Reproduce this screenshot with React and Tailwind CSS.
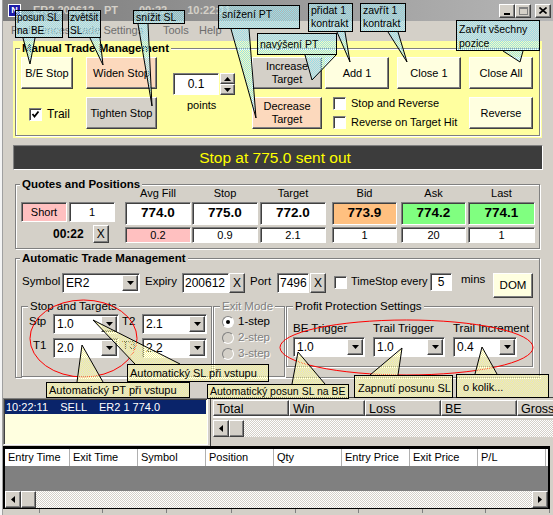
import React from "react";

const raised = "border border-t-white border-l-white border-r-[#404040] border-b-[#404040] shadow-[inset_-1px_-1px_0_#808080]";
const sunk = "border border-t-[#808080] border-l-[#808080] border-r-white border-b-white shadow-[inset_1px_1px_0_#404040]";
const etched = "border border-[#808080] shadow-[1px_1px_0_#fff,inset_1px_1px_0_#fff]";
const dither = "bg-[image:repeating-conic-gradient(#ffffff_0_25%,#d4d0c8_0_50%)] bg-[length:2px_2px]";
const cyan = "bg-white/25 bg-[image:repeating-conic-gradient(#96dfe9_0_25%,transparent_0_50%)] bg-[length:2px_2px] border border-black whitespace-nowrap";
const yel = "bg-white/30 bg-[image:repeating-conic-gradient(#f4f296_0_25%,transparent_0_50%)] bg-[length:2px_2px] border border-black whitespace-nowrap";

const DownTri = () => (
  <svg width="7" height="4" viewBox="0 0 7 4"><polygon points="0,0 7,0 3.5,4" fill="#000" /></svg>
);
const UpTri = () => (
  <svg width="7" height="4" viewBox="0 0 7 4"><polygon points="0,4 7,4 3.5,0" fill="#000" /></svg>
);
const LeftTri = () => (
  <svg width="4" height="7" viewBox="0 0 4 7"><polygon points="4,0 4,7 0,3.5" fill="#000" /></svg>
);
const RightTri = () => (
  <svg width="4" height="7" viewBox="0 0 4 7"><polygon points="0,0 0,7 4,3.5" fill="#000" /></svg>
);

const Btn = ({ w, h = "h-[32px]", bg = "bg-[#d4d0c8]", className = "", children }) => (
  <div className={`${w} ${h} ${bg} ${raised} shrink-0 flex items-center justify-center text-center leading-[13px] ${className}`}>
    {children}
  </div>
);

const Combo = ({ w, v }) => (
  <div className={`${w} h-[20px] shrink-0 flex bg-white ${sunk} p-[1px]`}>
    <span className="flex-1 pl-[2px] text-[12px] leading-[16px]">{v}</span>
    <div className={`w-[16px] h-full bg-[#d4d0c8] ${raised} flex items-center justify-center`}>
      <DownTri />
    </div>
  </div>
);

const Check = ({ on }) => (
  <div className={`w-[13px] h-[13px] shrink-0 bg-white ${sunk} flex items-center justify-center`}>
    {on && (
      <svg width="9" height="9" viewBox="0 0 9 9">
        <polyline points="1.5,4 3.5,6.5 7.5,1.5" fill="none" stroke="#000" strokeWidth="1.8" />
      </svg>
    )}
  </div>
);

const Radio = ({ on, off }) => (
  <div className={`w-[12px] h-[12px] rounded-full border border-[#808080] border-r-white border-b-white ${off ? "bg-[#d4d0c8]" : "bg-white"} flex items-center justify-center`}>
    {on && <div className="w-[4px] h-[4px] rounded-full bg-black" />}
  </div>
);

function TitleBar() {
  return (
    <div className="h-[21px] flex items-center pl-[5px] pr-[2px] bg-linear-to-r from-[#7c7c7c] to-[#b6b6b6]">
      <div className="w-[13px] h-[13px] bg-[#1c1ca8] border border-white text-white text-[9px] font-bold leading-[11px] text-center">N</div>
      <span className="ml-[12px] text-[#d4d0c8] font-bold text-[11px]">ER2 200612 - PT</span>
      <span className="ml-[21px] text-[#d4d0c8] font-bold text-[11px]">00:22</span>
      <span className="ml-[20px] text-[#d4d0c8] font-bold text-[11px]">10:22:11</span>
      <div className="flex-1" />
      <div className={`w-[16px] h-[14px] bg-[#d4d0c8] ${raised} flex items-end justify-center pb-[2px]`}>
        <div className="w-[6px] h-[2px] bg-black" />
      </div>
      <div className={`w-[16px] h-[14px] bg-[#d4d0c8] ${raised} flex items-center justify-center`}>
        <div className="w-[9px] h-[8px] border border-[#808080] border-t-2" />
      </div>
      <div className={`ml-[4px] w-[16px] h-[14px] bg-[#d4d0c8] ${raised} flex items-center justify-center`}>
        <svg width="8" height="7" viewBox="0 0 8 7">
          <path d="M0.5 0.5 L7.5 6.5 M7.5 0.5 L0.5 6.5" stroke="#000" strokeWidth="1.6" />
        </svg>
      </div>
    </div>
  );
}

function MenuBar() {
  return (
    <div className="h-[19px] flex items-center pl-[8px] text-[11px] text-[#6e6e6e] whitespace-nowrap">
      <span className="w-[61px]">Preferences</span>
      <span className="w-[91px]">Trade Settings</span>
      <span className="w-[36px]">Tools</span>
      <span>Help</span>
    </div>
  );
}

function ManualPanel() {
  return (
    <div className="h-[98px] pl-[10px] pt-[1px]">
      <div className="w-[529px] h-[97px] bg-[#ffff9f] px-[2px] pt-[1px]">
        <fieldset className={`w-[525px] h-[94px] ${etched}`}>
          <legend className="ml-[4px] px-[2px] bg-[#ffff9f] font-bold text-[11.5px] leading-[13px]">Manual Trade Management</legend>
          <div className="flex items-start pl-[5px] pt-[2px] text-[11px] whitespace-nowrap">
            <div className="w-[52px] flex flex-col">
              <Btn w="w-[52px]" bg="bg-[#ffffe0]">B/E Stop</Btn>
              <div className="mt-[16px] ml-[8px] flex items-center">
                <Check on />
                <span className="ml-[5px] text-[12px]">Trail</span>
              </div>
            </div>
            <div className="ml-[13px] w-[71px] flex flex-col">
              <Btn w="w-[71px]" bg="bg-[#fcd9bd]">Widen Stop</Btn>
              <Btn w="w-[71px]" className="mt-[8px]">Tighten Stop</Btn>
            </div>
            <div className="ml-[16px] mt-[16px] w-[62px] flex flex-col">
              <div className="flex">
                <div className={`w-[46px] h-[22px] bg-white ${sunk} flex items-center justify-center text-[12px]`}>0.1</div>
                <div className="ml-[1px] flex flex-col">
                  <div className={`w-[15px] h-[11px] bg-[#d4d0c8] ${raised} flex items-center justify-center`}><UpTri /></div>
                  <div className={`w-[15px] h-[11px] bg-[#d4d0c8] ${raised} flex items-center justify-center`}><DownTri /></div>
                </div>
              </div>
              <span className="ml-[14px] mt-[4px] leading-[13px]">points</span>
            </div>
            <div className="ml-[17px] w-[70px] flex flex-col">
              <Btn w="w-[70px]">Increase<br />Target</Btn>
              <Btn w="w-[70px]" bg="bg-[#fcd9bd]" className="mt-[8px]">Decrease<br />Target</Btn>
            </div>
            <div className="ml-[3px] flex flex-col">
              <div className="flex">
                <Btn w="w-[64px]" bg="bg-[#ffffe0]">Add 1</Btn>
                <Btn w="w-[64px]" bg="bg-[#ffffe0]" className="ml-[8px]">Close 1</Btn>
              </div>
              <div className="mt-[8px] ml-[8px] flex items-center h-[13px]">
                <Check />
                <span className="ml-[5px]">Stop and Reverse</span>
              </div>
              <div className="mt-[6px] ml-[8px] flex items-center h-[13px]">
                <Check />
                <span className="ml-[5px]">Reverse on Target Hit</span>
              </div>
            </div>
            <div className="ml-[8px] w-[64px] flex flex-col">
              <Btn w="w-[64px]" bg="bg-[#ffffe0]">Close All</Btn>
              <Btn w="w-[64px]" bg="bg-[#ffffe0]" className="mt-[8px]">Reverse</Btn>
            </div>
          </div>
        </fieldset>
      </div>
    </div>
  );
}

function StatusLine() {
  return (
    <div className={`mt-[7px] ml-[10px] w-[530px] h-[25px] bg-[#3c3c3c] ${sunk} flex items-center justify-center pr-[6px] text-[#ffff00] text-[15.5px]`}>
      Stop at 775.0 sent out
    </div>
  );
}

const quoteCols = [
  { h: "Avg Fill", v: "774.0", s: "0.2", w: "w-[66px]", ml: "", vb: "bg-white", sb: "bg-[#ffc0c0]" },
  { h: "Stop", v: "775.0", s: "0.9", w: "w-[66px]", ml: "ml-[1px]", vb: "bg-white", sb: "bg-white" },
  { h: "Target", v: "772.0", s: "2.1", w: "w-[66px]", ml: "ml-[2px]", vb: "bg-white", sb: "bg-white" },
  { h: "Bid", v: "773.9", s: "1", w: "w-[65px]", ml: "ml-[6px]", vb: "bg-[#ffc080]", sb: "bg-white" },
  { h: "Ask", v: "774.2", s: "20", w: "w-[65px]", ml: "ml-[4px]", vb: "bg-[#80ff80]", sb: "bg-white" },
  { h: "Last", v: "774.1", s: "1", w: "w-[67px]", ml: "ml-[2px]", vb: "bg-[#80ff80]", sb: "bg-white" },
];

function Quotes() {
  return (
    <fieldset className={`mt-[8px] ml-[12px] w-[525px] h-[71px] ${etched}`}>
      <legend className="ml-[4px] px-[2px] bg-[#d4d0c8] font-bold text-[11.5px] leading-[13px]">Quotes and Positions</legend>
      <div className="flex items-start pl-[5px]">
        <div className="mt-[11px] flex flex-col">
          <div className="flex">
            <div className={`w-[46px] h-[20px] bg-[#ffc0c0] ${sunk} flex items-center justify-center`}>Short</div>
            <div className={`ml-[2px] w-[46px] h-[20px] bg-white ${sunk} flex items-center justify-center`}>1</div>
          </div>
          <div className="mt-[3px] h-[18px] flex items-center">
            <span className="ml-[32px] font-bold text-[12px]">00:22</span>
            <Btn w="w-[16px]" h="h-[18px]" className="ml-[9px] text-[12px]">X</Btn>
          </div>
        </div>
        <div className="ml-[10px] -mt-[5px] flex">
          {quoteCols.map((c) => (
            <div key={c.h} className={`${c.w} ${c.ml} flex flex-col`}>
              <div className="h-[14px] leading-[14px] text-center">{c.h}</div>
              <div className={`mt-[2px] h-[23px] ${c.vb} ${sunk} flex items-center justify-center font-bold text-[13.5px]`}>{c.v}</div>
              <div className={`mt-[2px] h-[16px] ${c.sb} ${sunk} flex items-center justify-center`}>{c.s}</div>
            </div>
          ))}
        </div>
      </div>
    </fieldset>
  );
}

function AutoPanel() {
  return (
    <fieldset className={`mt-[3px] ml-[12px] w-[525px] h-[126px] ${etched}`}>
      <legend className="ml-[4px] px-[2px] bg-[#d4d0c8] font-bold text-[11.5px] leading-[13px]">Automatic Trade Management</legend>
      <div className="flex items-start pl-[6px] pt-[8px] h-[33px] text-[11.5px] whitespace-nowrap">
        <span className="w-[40px] mt-[1px] leading-[14px]">Symbol</span>
        <Combo w="w-[78px]" v="ER2" />
        <span className="ml-[5px] w-[37px] mt-[1px] leading-[14px]">Expiry</span>
        <div className={`w-[47px] h-[20px] bg-white ${sunk} flex items-center pl-[2px] text-[12px]`}>200612</div>
        <Btn w="w-[16px]" h="h-[20px]" className="text-[12px]">X</Btn>
        <span className="ml-[5px] w-[27px] mt-[1px] leading-[14px]">Port</span>
        <div className={`w-[32px] h-[20px] bg-white ${sunk} flex items-center pl-[2px] text-[12px]`}>7496</div>
        <Btn w="w-[16px]" h="h-[20px]" className="ml-[1px] text-[12px]">X</Btn>
        <div className="ml-[8px] mt-[3px]"><Check /></div>
        <span className="ml-[4px] w-[79px] mt-[1px] leading-[14px] text-[11px]">TimeStop every</span>
        <div className={`w-[22px] h-[18px] bg-white ${sunk} flex items-center justify-center text-[12px]`}>5</div>
        <span className="ml-[9px] w-[32px] leading-[12px]">mins</span>
        <Btn w="w-[40px]" h="h-[25px]" bg="bg-[#ffffe0]">DOM</Btn>
      </div>
      <div className="flex items-start pl-[5px] mt-[2px] text-[11.5px] whitespace-nowrap">
        <fieldset className={`w-[191px] h-[77px] ${etched}`}>
          <legend className="ml-[6px] px-[2px] bg-[#d4d0c8] leading-[13px]">Stop and Targets</legend>
          <div className="flex items-start pl-[7px] mt-[1px]">
            <span className="w-[24px] leading-[14px]">Stp</span>
            <Combo w="w-[66px]" v="1.0" />
            <span className="w-[23px] pl-[3px] leading-[14px]">T2</span>
            <Combo w="w-[65px]" v="2.1" />
          </div>
          <div className="flex items-start pl-[7px] mt-[4px]">
            <span className="w-[24px] pl-[4px] leading-[14px]">T1</span>
            <Combo w="w-[66px]" v="2.0" />
            <span className="w-[23px] pl-[3px] leading-[14px]">T3</span>
            <Combo w="w-[65px]" v="2.2" />
          </div>
        </fieldset>
        <fieldset className={`ml-[1px] w-[72px] h-[77px] ${etched}`}>
          <legend className="ml-[6px] px-[2px] bg-[#d4d0c8] leading-[13px] text-[#808080] [text-shadow:1px_1px_0_#fff]">Exit Mode</legend>
          <div className="flex flex-col pl-[8px] mt-[1px]">
            <div className="h-[16px] flex items-center"><Radio on /><span className="ml-[4px]">1-step</span></div>
            <div className="h-[16px] flex items-center text-[#808080] [text-shadow:1px_1px_0_#fff]"><Radio off /><span className="ml-[4px]">2-step</span></div>
            <div className="h-[16px] flex items-center text-[#808080] [text-shadow:1px_1px_0_#fff]"><Radio off /><span className="ml-[4px]">3-step</span></div>
          </div>
        </fieldset>
        <fieldset className={`ml-[1px] w-[247px] h-[67px] ${etched}`}>
          <legend className="ml-[6px] px-[2px] bg-[#d4d0c8] leading-[13px]">Profit Protection Settings</legend>
          <div className="flex pl-[6px]">
            <div className="flex flex-col">
              <span className="mt-[8px] leading-[14px]">BE Trigger</span>
              <div className="mt-[2px]"><Combo w="w-[72px]" v="1.0" /></div>
            </div>
            <div className="ml-[8px] flex flex-col">
              <span className="mt-[8px] leading-[14px]">Trail Trigger</span>
              <div className="mt-[2px]"><Combo w="w-[72px]" v="1.0" /></div>
            </div>
            <div className="ml-[8px] flex flex-col">
              <span className="mt-[8px] leading-[14px]">Trail Increment</span>
              <div className="mt-[2px]"><Combo w="w-[64px]" v="0.4" /></div>
            </div>
          </div>
        </fieldset>
      </div>
    </fieldset>
  );
}

const ScrollBar = ({ right = true }) => (
  <div className={`h-[17px] flex ${dither}`}>
    <div className={`w-[16px] h-full bg-[#d4d0c8] ${raised} flex items-center justify-center`}><LeftTri /></div>
    <div className={`w-[15px] h-full bg-[#d4d0c8] ${raised}`} />
    <div className="flex-1" />
    {right && <div className={`w-[16px] h-full bg-[#d4d0c8] ${raised} flex items-center justify-center`}><RightTri /></div>}
  </div>
);

const tradeCols = ["Entry Time", "Exit Time", "Symbol", "Position", "Qty", "Entry Price", "Exit Price", "P/L"];

function BottomPanes() {
  return (
    <div className="mt-[19px] flex flex-col">
      <div className="h-[49px] flex">
        <div className={`w-[205px] h-[47px] shrink-0 mt-[1px] bg-[#ffffe0] ${sunk} p-[1px]`}>
          <div className="h-[14px] bg-[#0a246a] text-white text-[11px] leading-[14px] pl-[1px] whitespace-pre">10:22:11    SELL    ER2 1 774.0</div>
        </div>
        <div className="ml-[2px] flex-1 min-w-0 overflow-hidden border-l border-t border-[#404040] pl-[2px] pt-[2px] flex flex-col">
          <div className="h-[18px] flex text-[12.5px] border-b-2 border-white whitespace-nowrap">
            {["Total", "Win", "Loss", "BE", "Gross"].map((t) => (
              <div key={t} className={`w-[76px] shrink-0 h-full bg-[#d4d0c8] ${raised} pl-[3px] leading-[16px]`}>{t}</div>
            ))}
          </div>
          <div className="mt-[2px] w-[340px]"><ScrollBar right={false} /></div>
        </div>
      </div>
      <div className="w-[547px] border-t-[3px] border-x-2 border-b border-black flex flex-col">
        <div className="h-[17px] bg-white flex text-[11px] whitespace-nowrap">
          {tradeCols.map((t, i) => (
            <div key={t} className={`${i === 0 ? "w-[65px]" : "w-[68px]"} shrink-0 h-full border-r border-[#b0b0b0] pl-[3px] leading-[17px]`}>{t}</div>
          ))}
        </div>
        <div className="h-[25px] bg-[#808080]" />
        <ScrollBar />
      </div>
      <div className="h-[6px] flex">
        {[37, 63, 64, 65, 64, 63, 64, 63, 64].map((w, i) => (
          <div key={i} className="h-[4px] border-r border-[#808080] shrink-0" style={{ width: w }} />
        ))}
      </div>
    </div>
  );
}

const cyanTails = [
  [23, 38, 30, 64, 35, 38],
  [90, 38, 103, 65, 100, 38],
  [138, 24, 152, 106, 148, 24],
  [231, 29, 256, 118, 249, 29],
  [305, 55, 312, 80, 336, 55],
  [337, 32, 350, 62, 345, 32],
  [388, 32, 407, 62, 398, 32],
  [503, 51, 520, 62, 523, 51],
];
const yelTails = [
  [135, 364, 93, 320, 180, 364],
  [77, 382, 82, 345, 103, 382],
  [292, 384, 298, 352, 325, 384],
  [370, 375, 402, 348, 398, 375],
  [475, 374, 482, 347, 497, 374],
];

function Overlay() {
  const tail = (t, fill, i) => {
    const pts = `${t[0]},${t[1]} ${t[2]},${t[3]} ${t[4]},${t[5]}`;
    return (
      <g key={i}>
        <polygon points={pts} fill={fill} />
        <polyline points={pts} fill="none" stroke="#000" strokeWidth="1" />
      </g>
    );
  };
  return (
    <div className="absolute inset-0 pointer-events-none text-[10.5px] text-black">
      <svg className="absolute inset-0" width="553" height="515" viewBox="0 0 553 515">
        <defs>
          <pattern id="pc" width="2" height="2" patternUnits="userSpaceOnUse">
            <rect width="2" height="2" fill="rgba(255,255,255,0.25)" />
            <rect width="1" height="1" fill="#96dfe9" />
            <rect x="1" y="1" width="1" height="1" fill="#96dfe9" />
          </pattern>
          <pattern id="py" width="2" height="2" patternUnits="userSpaceOnUse">
            <rect width="2" height="2" fill="rgba(255,255,255,0.3)" />
            <rect width="1" height="1" fill="#f4f296" />
            <rect x="1" y="1" width="1" height="1" fill="#f4f296" />
          </pattern>
        </defs>
        <ellipse cx="83.5" cy="338.5" rx="53.5" ry="38.5" fill="none" stroke="#ff0000" strokeWidth="1" />
        <ellipse cx="406.5" cy="347.5" rx="126.5" ry="27.5" fill="none" stroke="#ff0000" strokeWidth="1" />
        {cyanTails.map((t, i) => tail(t, "url(#pc)", i))}
        {yelTails.map((t, i) => tail(t, "url(#py)", 100 + i))}
      </svg>

      <div className={`absolute left-[15px] top-[10px] w-[48px] h-[28px] ${cyan} pl-[1px] leading-[13px] text-[10px]`}>posun SL<br />na BE</div>
      <div className={`absolute left-[68px] top-[10px] w-[33px] h-[28px] ${cyan} pl-[1px] leading-[13px] text-[10px]`}>zvětšit<br />SL</div>
      <div className={`absolute left-[133px] top-[10px] w-[52px] h-[14px] ${cyan} pl-[2px] leading-[12px]`}>snížit SL</div>
      <div className={`absolute left-[218px] top-[5px] w-[82px] h-[24px] ${cyan} pl-[3px] pt-[1px] leading-[14px]`}>snížení PT</div>
      <div className={`absolute left-[257px] top-[33px] w-[80px] h-[22px] ${cyan} pl-[2px] pt-[3px] leading-[14px]`}>navýšení PT</div>
      <div className={`absolute left-[308px] top-[3px] w-[45px] h-[29px] ${cyan} pl-[2px] leading-[13px]`}>přidat 1<br />kontrakt</div>
      <div className={`absolute left-[360px] top-[3px] w-[46px] h-[29px] ${cyan} pl-[2px] leading-[13px]`}>zavřít 1<br />kontrakt</div>
      <div className={`absolute left-[456px] top-[20px] w-[84px] h-[31px] ${cyan} pl-[2px] pt-[1px] leading-[14px]`}>Zavřít všechny<br />pozice</div>

      <div className={`absolute left-[127px] top-[364px] w-[142px] h-[18px] ${yel} pl-[2px] flex items-center text-[11px]`}>Automatický SL při vstupu</div>
      <div className={`absolute left-[46px] top-[382px] w-[144px] h-[16px] ${yel} pl-[2px] flex items-center text-[11px]`}>Automatický PT při vstupu</div>
      <div className={`absolute left-[207px] top-[384px] w-[142px] h-[15px] ${yel} pl-[2px] flex items-end leading-[13px] overflow-hidden`}>Automatický posun SL na BE</div>
      <div className={`absolute left-[354px] top-[375px] w-[99px] h-[23px] ${yel} pl-[3px] flex items-center pt-[3px] text-[11px]`}>Zapnutí posunu SL</div>
      <div className={`absolute left-[456px] top-[374px] w-[93px] h-[24px] ${yel} pl-[6px] flex items-center pt-[2px] text-[11px]`}>o kolik...</div>
    </div>
  );
}

export default function App() {
  return (
    <div className="relative flex w-[553px] h-[515px] overflow-hidden bg-[#d4d0c8] font-['Liberation_Sans',Arial,sans-serif] text-[11px] text-black">
      <div className="w-[3px] h-full bg-[#f4f4f4] border-r border-[#a0a0a0] shrink-0" />
      <div className="flex flex-col w-[550px] shrink-0">
        <TitleBar />
        <MenuBar />
        <ManualPanel />
        <StatusLine />
        <Quotes />
        <AutoPanel />
        <BottomPanes />
      </div>
      <Overlay />
    </div>
  );
}
